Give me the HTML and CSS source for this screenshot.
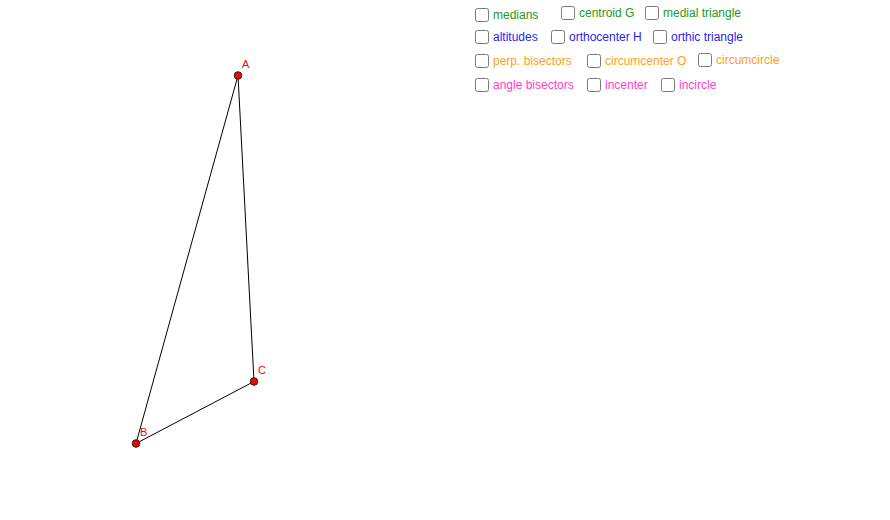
FILE: index.html
```html
<!DOCTYPE html>
<html>
<head>
<meta charset="utf-8">
<link rel="stylesheet" href="styles.css">
</head>
<body>
<div class="applet">
  <svg class="drawing" width="890" height="520" viewBox="0 0 890 520">
    <polygon points="238,75.5 136,443.5 254,381.5" fill="none" stroke="#000" stroke-width="1"/>
    <circle cx="238" cy="75.5" r="3.8" fill="#f00" stroke="#222" stroke-width="1"/>
    <circle cx="136" cy="443.5" r="3.8" fill="#f00" stroke="#222" stroke-width="1"/>
    <circle cx="254" cy="381.5" r="3.8" fill="#f00" stroke="#222" stroke-width="1"/>
    <text class="pt" x="242" y="67.5">A</text>
    <text class="pt" x="140" y="436">B</text>
    <text class="pt" x="258" y="374">C</text>
  </svg>

  <label class="cb green" style="left:475px;top:8px"><span class="box"></span>medians</label>
  <label class="cb green" style="left:561px;top:6px"><span class="box"></span>centroid G</label>
  <label class="cb green" style="left:645px;top:6px"><span class="box"></span>medial triangle</label>

  <label class="cb blue" style="left:475px;top:30px"><span class="box"></span>altitudes</label>
  <label class="cb blue" style="left:551px;top:30px"><span class="box"></span>orthocenter H</label>
  <label class="cb blue" style="left:653px;top:30px"><span class="box"></span>orthic triangle</label>

  <label class="cb orange" style="left:475px;top:54px"><span class="box"></span>perp. bisectors</label>
  <label class="cb orange" style="left:587px;top:54px"><span class="box"></span>circumcenter O</label>
  <label class="cb orange" style="left:698px;top:53px"><span class="box"></span>circumcircle</label>

  <label class="cb pink" style="left:475px;top:78px"><span class="box"></span>angle bisectors</label>
  <label class="cb pink" style="left:587px;top:78px"><span class="box"></span>incenter</label>
  <label class="cb pink" style="left:661px;top:78px"><span class="box"></span>incircle</label>
</div>
</body>
</html>
```

FILE: styles.css
```css
html, body {
  margin: 0;
  padding: 0;
  background: #fff;
}
.applet {
  position: relative;
  width: 890px;
  height: 520px;
  overflow: hidden;
  font-family: "Liberation Sans", Arial, sans-serif;
}
.drawing {
  position: absolute;
  left: 0;
  top: 0;
  display: block;
}
.pt {
  font-family: "Liberation Sans", Arial, sans-serif;
  font-size: 11px;
  fill: #ff0000;
}
.cb {
  position: absolute;
  display: flex;
  align-items: center;
  gap: 4px;
  font-size: 12px;
  line-height: 14px;
  white-space: nowrap;
}
.box {
  box-sizing: border-box;
  width: 14px;
  height: 14px;
  border: 1.5px solid #7a7a7a;
  border-radius: 2.5px;
  background: #fff;
}
.green { color: #1a9a1a; }
.blue { color: #1f1fee; }
.orange { color: #ff9e1c; }
.pink { color: #ff40cc; }
```
